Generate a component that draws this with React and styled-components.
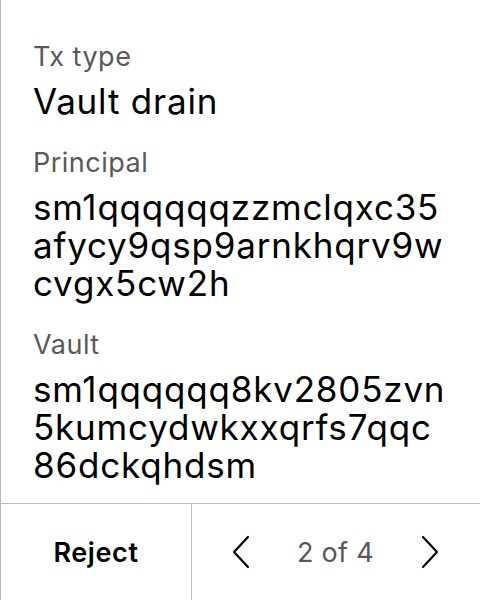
import React from "react";
import styled, { createGlobalStyle } from "styled-components";

const GlobalStyle = createGlobalStyle`
  html, body {
    margin: 0;
    padding: 0;
    background: #fff;
  }
  body {
    font-family: Inter, "Noto Sans", sans-serif;
  }
`;

const Screen = styled.div`
  width: 480px;
  height: 600px;
  box-sizing: border-box;
  border-left: 1px solid #b8b8b8;
  display: flex;
  flex-direction: column;
  overflow: hidden;
`;

const Body = styled.div`
  flex: 1;
  padding: 41px 27px 0 32px;
  display: flex;
  flex-direction: column;
  gap: 27px;
`;

const Field = styled.div`
  display: flex;
  flex-direction: column;
  gap: 9px;
`;

const Label = styled.div`
  font-size: 27px;
  line-height: 32px;
  letter-spacing: 0.5px;
  color: #595959;
`;

const Value = styled.div`
  font-size: 35px;
  line-height: 38px;
  letter-spacing: 0.8px;
  color: #000;
  word-break: break-all;
`;

const Footer = styled.div`
  height: 96px;
  flex-shrink: 0;
  border-top: 1px solid #bdbdbd;
  display: grid;
  grid-template-columns: 191px 1fr;
`;

const RejectButton = styled.button`
  border: none;
  border-right: 1px solid #bdbdbd;
  background: transparent;
  font-family: inherit;
  font-size: 27px;
  font-weight: 600;
  letter-spacing: 0.6px;
  color: #000;
  padding: 0;
  cursor: pointer;
`;

const Pager = styled.div`
  display: flex;
  align-items: center;
  justify-content: space-between;
  padding: 0 41px 0 40px;
`;

const Arrow = styled.button`
  border: none;
  background: transparent;
  padding: 0;
  width: 18px;
  height: 34px;
  display: flex;
  align-items: center;
  justify-content: center;
  cursor: pointer;
`;

const PageText = styled.span`
  font-size: 27px;
  letter-spacing: 0.3px;
  color: #595959;
`;

const Chevron = ({ dir }) => (
  <svg width="18" height="34" viewBox="0 0 18 34" fill="none">
    <path
      d={dir === "left" ? "M16 2 L2 17 L16 32" : "M2 2 L16 17 L2 32"}
      stroke="#000"
      strokeWidth="2.2"
      strokeLinecap="round"
      strokeLinejoin="round"
    />
  </svg>
);

const fields = [
  { label: "Tx type", value: "Vault drain" },
  { label: "Principal", value: "sm1qqqqqqzzmclqxc35afycy9qsp9arnkhqrv9wcvgx5cw2h" },
  { label: "Vault", value: "sm1qqqqqq8kv2805zvn5kumcydwkxxqrfs7qqc86dckqhdsm" },
];

export default function App() {
  return (
    <Screen>
      <GlobalStyle />
      <Body>
        {fields.map((f) => (
          <Field key={f.label}>
            <Label>{f.label}</Label>
            <Value>{f.value}</Value>
          </Field>
        ))}
      </Body>
      <Footer>
        <RejectButton>Reject</RejectButton>
        <Pager>
          <Arrow aria-label="Previous">
            <Chevron dir="left" />
          </Arrow>
          <PageText>2 of 4</PageText>
          <Arrow aria-label="Next">
            <Chevron dir="right" />
          </Arrow>
        </Pager>
      </Footer>
    </Screen>
  );
}
